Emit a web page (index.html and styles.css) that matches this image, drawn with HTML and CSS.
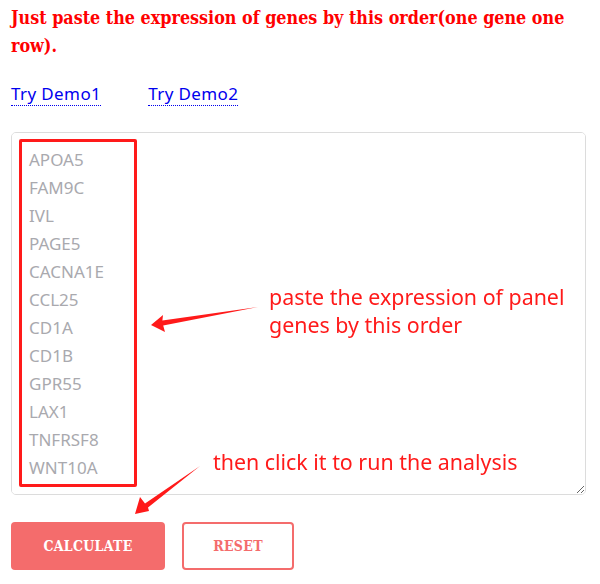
FILE: index.html
```
<!DOCTYPE html>
<html>
<head>
<meta charset="utf-8">
<link rel="stylesheet" href="styles.css">
</head>
<body>
<div class="page">
  <h3 class="title">Just paste the expression of genes by this order(one gene one row).</h3>
  <div class="demos">
    <a class="demo" href="#">Try Demo1</a>
    <a class="demo" href="#">Try Demo2</a>
  </div>
  <div class="editor">
    <textarea class="genes" placeholder="APOA5&#10;FAM9C&#10;IVL&#10;PAGE5&#10;CACNA1E&#10;CCL25&#10;CD1A&#10;CD1B&#10;GPR55&#10;LAX1&#10;TNFRSF8&#10;WNT10A"></textarea>
    <div class="mark"></div>
    <svg class="arrows" width="575" height="400" viewBox="0 0 575 400">
      <polygon points="140,193 152,183 151.4,188.6 247,175 152.2,193.6 154,200" fill="#ff1a1a"/>
      <polygon points="124,382 129,365 134,371.5 189,334 137,375.5 138,379" fill="#ff1a1a"/>
    </svg>
    <div class="note note-paste">paste the expression of panel<br>genes by this order</div>
    <div class="note note-click">then click it to run the analysis</div>
  </div>
  <div class="actions">
    <button class="btn btn-primary">Calculate</button>
    <button class="btn btn-outline">Reset</button>
  </div>
</div>
</body>
</html>
```
FILE: styles.css
```
html, body {
  margin: 0;
  padding: 0;
  background: #fff;
}
.page {
  padding: 4px 14px 0 11px;
  width: 575px;
}
.title {
  margin: 0;
  font-family: "DejaVu Serif Condensed", "DejaVu Serif", serif;
  font-stretch: condensed;
  font-weight: bold;
  font-size: 17.8px;
  line-height: 28px;
  color: #ff0000;
}
.demos {
  display: flex;
  gap: 47px;
  margin-top: 22px;
  height: 24px;
}
.demo {
  font-family: "Noto Sans", sans-serif;
  font-size: 17px;
  letter-spacing: 0.4px;
  line-height: 24px;
  color: #0000ee;
  text-decoration: none;
  border-bottom: 1px dotted #0000ee;
  height: 23px;
}
.editor {
  position: relative;
  margin-top: 26px;
  height: 363px;
}
.genes {
  box-sizing: border-box;
  display: block;
  width: 575px;
  height: 363px;
  margin: 0;
  padding: 13px 17px;
  border: 1px solid #dcdcdc;
  border-radius: 5px;
  font-family: "Noto Sans", sans-serif;
  font-size: 17px;
  line-height: 28px;
  color: #333;
  background: #fff;
}
.genes::placeholder {
  color: #a9a9ae;
}
.mark {
  position: absolute;
  left: 8px;
  top: 7px;
  width: 112px;
  height: 342px;
  border: 3px solid #ff1a1a;
  border-radius: 2px;
}
.arrows {
  position: absolute;
  left: 0;
  top: 0;
  overflow: visible;
  pointer-events: none;
}
.note {
  position: absolute;
  font-family: "Noto Sans", sans-serif;
  font-size: 21.4px;
  line-height: 28px;
  color: #ff1a1a;
  white-space: nowrap;
}
.note-paste {
  left: 258px;
  top: 151px;
}
.note-click {
  left: 202px;
  top: 316px;
}
.actions {
  display: flex;
  gap: 17px;
  margin-top: 27px;
}
.btn {
  box-sizing: border-box;
  height: 48px;
  border-radius: 4px;
  font-family: "DejaVu Serif Condensed", "DejaVu Serif", serif;
  font-stretch: condensed;
  font-weight: bold;
  font-size: 14px;
  letter-spacing: 0.3px;
  text-transform: uppercase;
  cursor: pointer;
}
.btn-primary {
  width: 154px;
  background: #f46c6c;
  border: 0;
  color: #fff;
}
.btn-outline {
  width: 112px;
  background: #fff;
  border: 2px solid #f46c6c;
  color: #f46c6c;
}
```
